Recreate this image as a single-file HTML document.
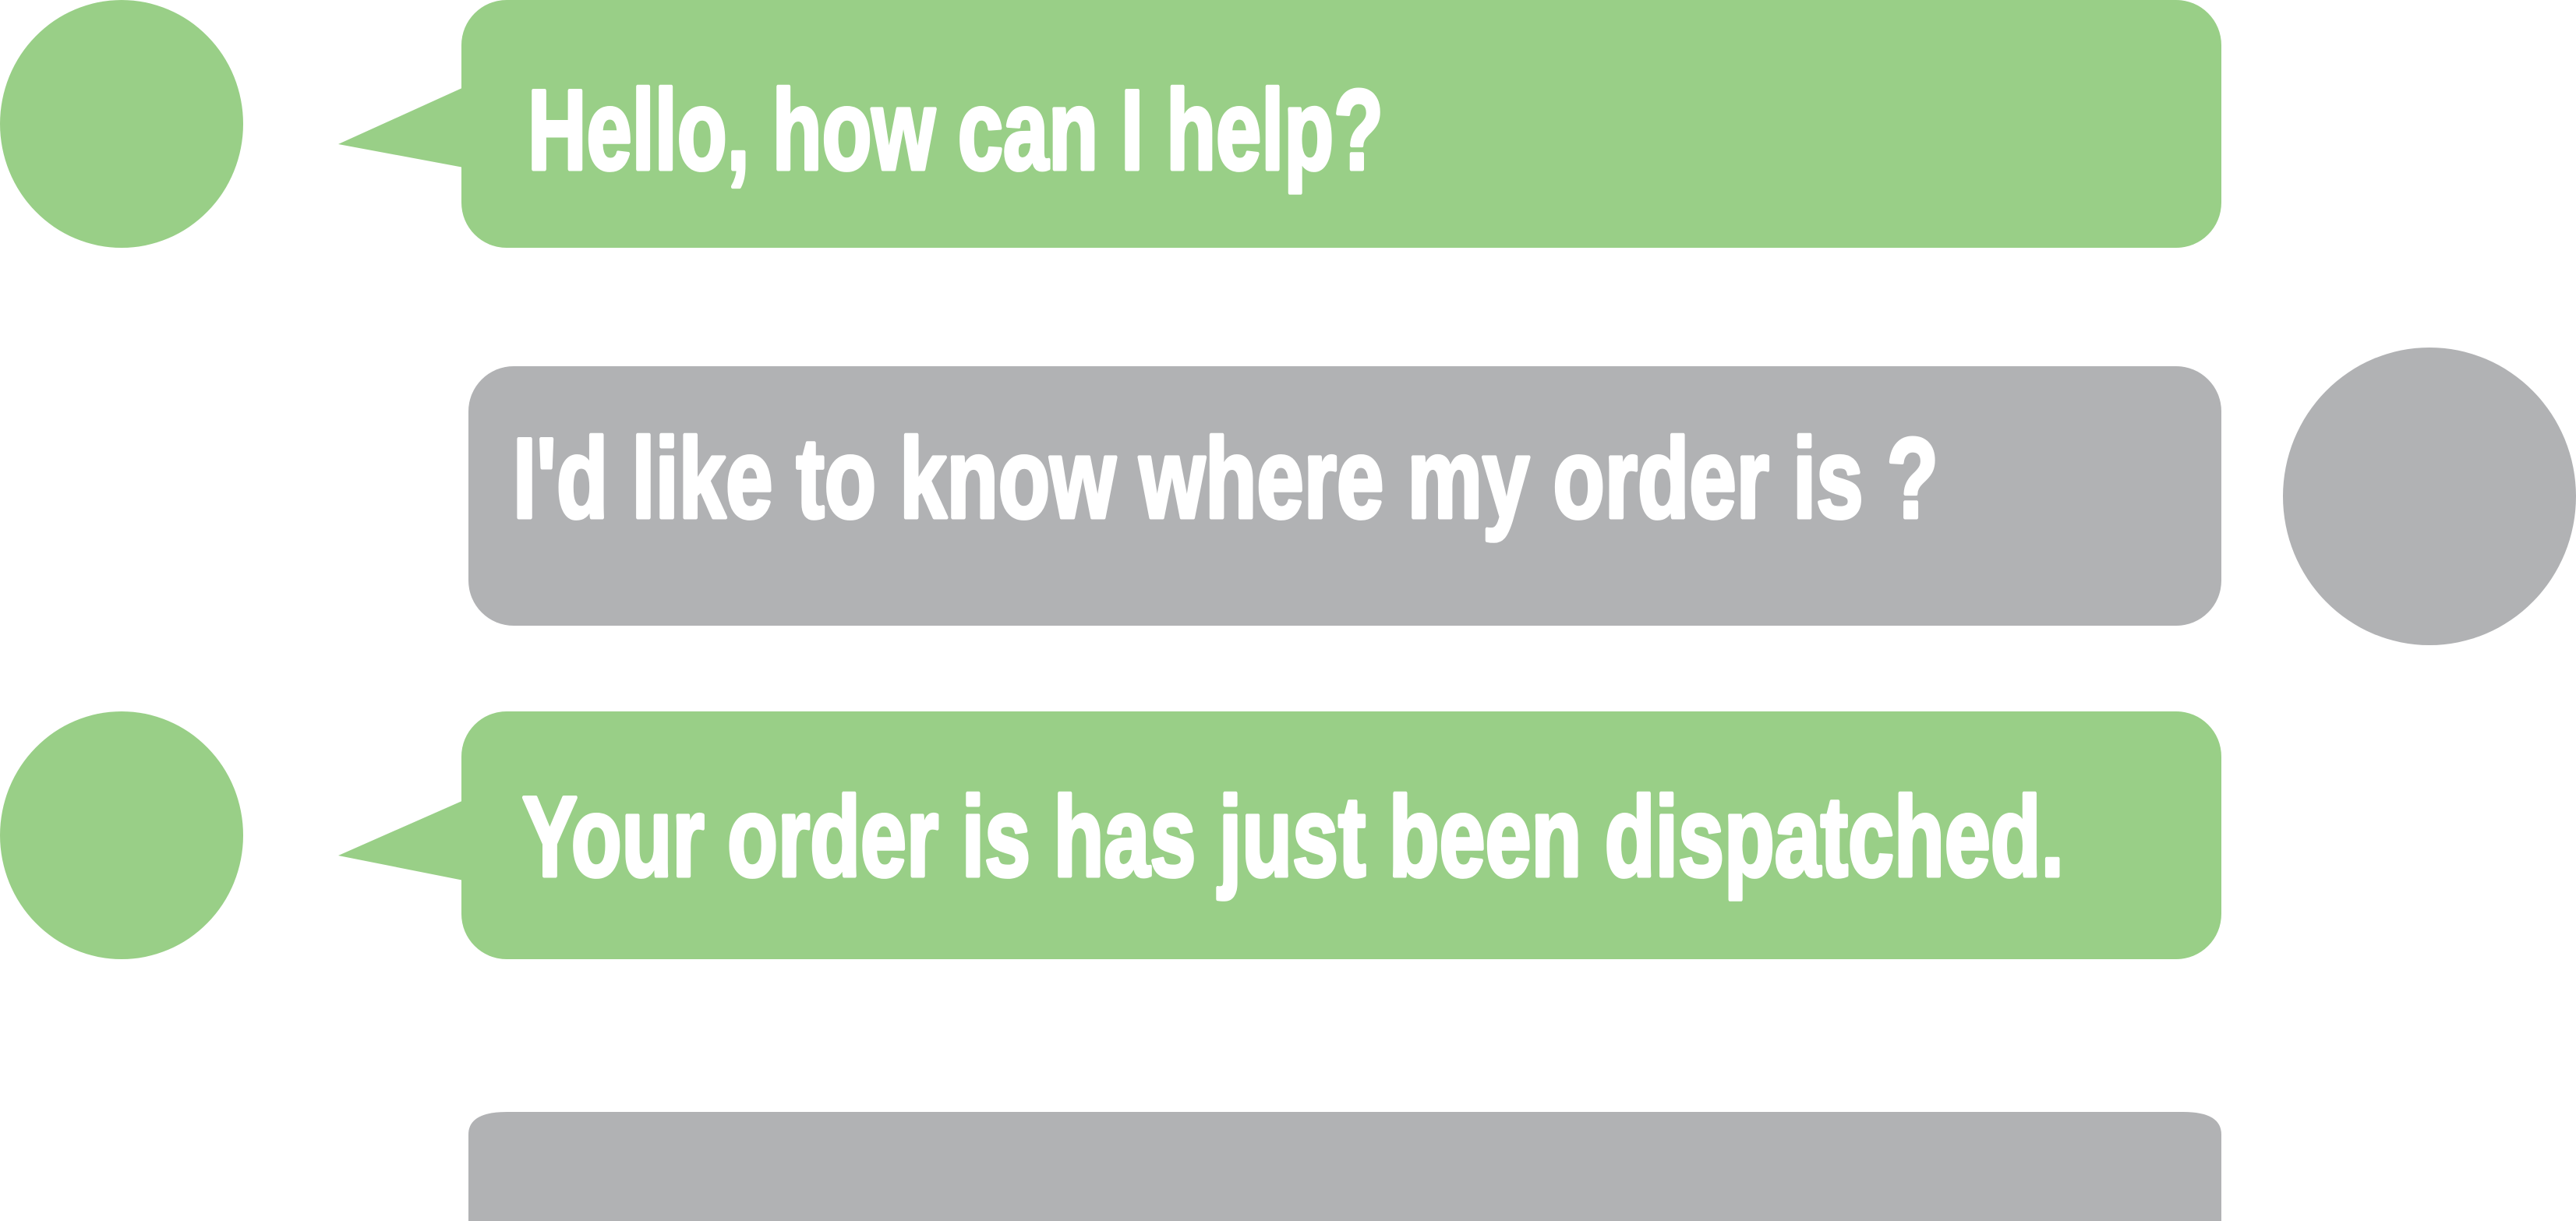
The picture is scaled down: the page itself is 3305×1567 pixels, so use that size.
<!DOCTYPE html>
<html><head><meta charset="utf-8"><style>
html,body{margin:0;padding:0;background:#fff;width:3305px;height:1567px;overflow:hidden}
svg{display:block}
text{font-family:"Liberation Sans",sans-serif;font-weight:bold;fill:#fff;font-size:146px;stroke:#fff;stroke-width:5px;stroke-linejoin:round}
</style></head><body>
<svg width="3305" height="1567" viewBox="0 0 3305 1567" xmlns="http://www.w3.org/2000/svg">
<ellipse cx="156" cy="159" rx="156" ry="159" fill="#99cf87"/>
<rect x="592" y="0" width="2258" height="318" rx="58" fill="#99cf87"/>
<polygon points="595,112 434,185 595,215" fill="#99cf87"/>
<text x="677" y="217" textLength="1098" lengthAdjust="spacingAndGlyphs">Hello, how can I help?</text>

<rect x="601" y="470" width="2249" height="333" rx="58" fill="#b1b2b4"/>
<ellipse cx="3117" cy="637" rx="188" ry="191" fill="#b1b2b4"/>
<text x="658" y="664" textLength="1829" lengthAdjust="spacingAndGlyphs">I'd like to know where my order is ?</text>

<ellipse cx="156" cy="1072" rx="156" ry="159" fill="#99cf87"/>
<rect x="592" y="913" width="2258" height="318" rx="58" fill="#99cf87"/>
<polygon points="595,1027 434,1098 595,1130" fill="#99cf87"/>
<text x="670" y="1124" textLength="1978" lengthAdjust="spacingAndGlyphs">Your order is has just been dispatched.</text>

<path d="M601,1567 L601,1456 Q601,1427 650,1427 L2801,1427 Q2850,1427 2850,1456 L2850,1567 Z" fill="#b1b2b4"/>
</svg>
</body></html>
